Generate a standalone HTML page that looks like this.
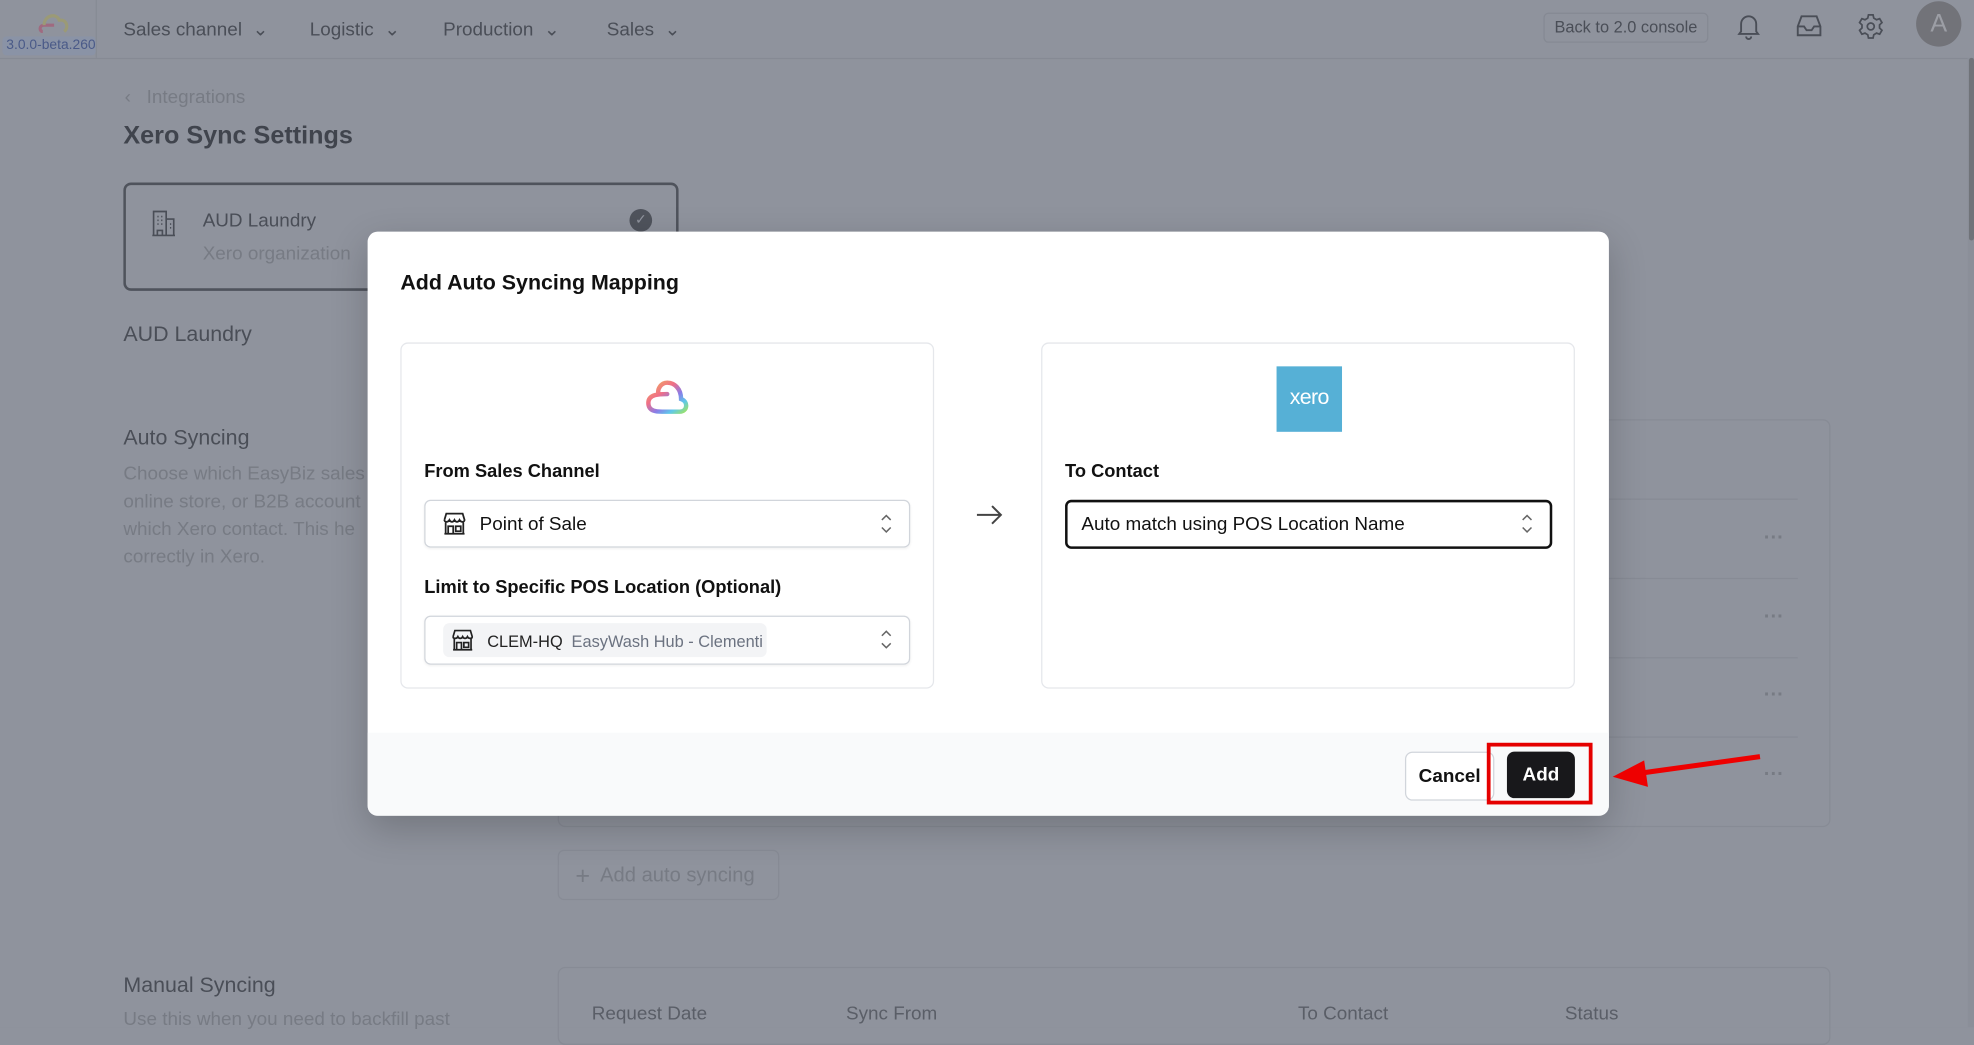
<!DOCTYPE html>
<html><head><meta charset="utf-8"><style>
html,body{margin:0;padding:0;width:1974px;height:1027px;overflow:hidden;background:#8f939d}
#w{position:absolute;left:0;top:0;width:1568px;height:816px;transform:scale(1.25893);transform-origin:0 0;font-family:"Liberation Sans",sans-serif;background:#8f939d;color:#3d414a}
.a{position:absolute;white-space:nowrap}
.g{color:#4a4e57}
.l{color:#777b84}
.m{color:#111}
</style></head><body><div id="w">
<!-- header -->
<div class="a" style="left:0;top:46px;width:1563px;height:1px;background:#868a94"></div>
<div class="a" style="left:76px;top:0;width:1px;height:46px;background:#878b95"></div>
<svg class="a" style="left:29px;top:8px" width="28" height="22" viewBox="0 0 28 22"><path d="M5 17 C2 17 2 12 6 12 L14 12" stroke="#a06a80" stroke-width="2.5" fill="none"/><path d="M6 12 C6 4 16 2 18 8 C24 7 26 14 22 17" stroke="#9b9a76" stroke-width="2.5" fill="none"/></svg>
<div class="a" style="left:2px;top:29px;width:74px;height:15px;background:#8a93a6;border-radius:3px"></div>
<div class="a" style="left:5px;top:30px;font-size:11px;color:#4a5a88">3.0.0-beta.260</div>
<div class="a g" style="left:98px;top:14px;font-size:15px">Sales channel&nbsp; ⌄</div>
<div class="a g" style="left:246px;top:14px;font-size:15px">Logistic&nbsp; ⌄</div>
<div class="a g" style="left:352px;top:14px;font-size:15px">Production&nbsp; ⌄</div>
<div class="a g" style="left:482px;top:14px;font-size:15px">Sales&nbsp; ⌄</div>
<div class="a g" style="left:1226px;top:10px;width:129px;height:22px;border:1px solid #858993;border-radius:4px;font-size:13px;line-height:22px;text-align:center">Back to 2.0 console</div>
<svg class="a" style="left:1379px;top:10px" width="20" height="22" viewBox="0 0 20 22" fill="none" stroke="#4a4e57" stroke-width="1.5"><path d="M4 15 V9 a6 6 0 0 1 12 0 V15 L17.5 17 H2.5 Z M8 19 a2 2 0 0 0 4 0"/></svg>
<svg class="a" style="left:1426px;top:11px" width="22" height="20" viewBox="0 0 22 20" fill="none" stroke="#4a4e57" stroke-width="1.5"><path d="M2 10 L5 2 H17 L20 10 V17 H2 Z M2 10 H7 L9 13 H13 L15 10 H20"/></svg>
<svg class="a" style="left:1475px;top:10px" width="22" height="22" viewBox="0 0 24 24" fill="none" stroke="#4a4e57" stroke-width="1.5"><circle cx="12" cy="12" r="3"/><path d="M10 2h4l.6 2.8 2.4 1.4 2.7-.9 2 3.4-2.1 1.9v2.8l2.1 1.9-2 3.4-2.7-.9-2.4 1.4L14 22h-4l-.6-2.8-2.4-1.4-2.7.9-2-3.4 2.1-1.9v-2.8L2.3 8.7l2-3.4 2.7.9 2.4-1.4z"/></svg>
<div class="a" style="left:1522px;top:1px;width:36px;height:36px;border-radius:50%;background:#727379;color:#9c9ea5;font-size:20px;line-height:36px;text-align:center">A</div>
<div class="a" style="left:1563px;top:46px;width:5px;height:770px;background:#8b8f99"></div>
<div class="a" style="left:1564px;top:46px;width:4px;height:145px;background:#707379;border-radius:2px"></div>
<!-- page -->
<div class="a l" style="left:99px;top:69px;font-size:15px">‹&nbsp;&nbsp; Integrations</div>
<div class="a" style="left:98px;top:97px;font-size:20px;font-weight:bold;color:#40444d">Xero Sync Settings</div>
<div class="a" style="left:98px;top:145px;width:437px;height:82px;border:2px solid #4f535c;border-radius:6px"></div>
<svg class="a" style="left:119px;top:166px" width="22" height="22" viewBox="0 0 22 22" fill="none" stroke="#4a4e57" stroke-width="1.3"><path d="M2 21 H20 M3 21 V2 H13 V21 M13 8 H19 V21 M6 6h1M9 6h1M6 9h1M9 9h1M6 12h1M9 12h1M6 21v-4h4v4M16 12h1M16 15h1"/></svg>
<div class="a g" style="left:161px;top:167px;font-size:15px">AUD Laundry</div>
<div class="a l" style="left:161px;top:193px;font-size:15px">Xero organization</div>
<div class="a" style="left:500px;top:166px;width:18px;height:18px;border-radius:50%;background:#4f535c;color:#8f939d;font-size:11px;line-height:18px;text-align:center">✓</div>
<div class="a g" style="left:98px;top:256px;font-size:17px">AUD Laundry</div>
<div class="a g" style="left:98px;top:338px;font-size:17px">Auto Syncing</div>
<div class="a l" style="left:98px;top:366px;font-size:15px;line-height:22px">Choose which EasyBiz sales<br>online store, or B2B account<br>which Xero contact. This he<br>correctly in Xero.</div>
<div class="a" style="left:443px;top:333px;width:1009px;height:322px;border:1px solid #878b95;border-radius:6px"></div>
<div class="a" style="left:1278px;top:396px;width:150px;height:1px;background:#878b95"></div>
<div class="a" style="left:1278px;top:459px;width:150px;height:1px;background:#878b95"></div>
<div class="a" style="left:1278px;top:522px;width:150px;height:1px;background:#878b95"></div>
<div class="a" style="left:1278px;top:585px;width:150px;height:1px;background:#878b95"></div>
<div class="a l" style="left:1401px;top:419px;font-size:16px;font-weight:bold">···</div>
<div class="a l" style="left:1401px;top:482px;font-size:16px;font-weight:bold">···</div>
<div class="a l" style="left:1401px;top:544px;font-size:16px;font-weight:bold">···</div>
<div class="a l" style="left:1401px;top:607px;font-size:16px;font-weight:bold">···</div>
<div class="a" style="left:443px;top:675px;width:174px;height:38px;border:1px solid #878b95;border-radius:5px"></div>
<div class="a l" style="left:457px;top:685px;font-size:16px"><span style="font-size:20px;vertical-align:-2px">+</span>&nbsp; Add auto syncing</div>
<div class="a g" style="left:98px;top:773px;font-size:17px">Manual Syncing</div>
<div class="a l" style="left:98px;top:801px;font-size:15px">Use this when you need to backfill past</div>
<div class="a" style="left:443px;top:768px;width:1009px;height:60px;border:1px solid #878b95;border-radius:6px"></div>
<div class="a l" style="left:470px;top:797px;font-size:15px;color:#5a5e67">Request Date</div>
<div class="a l" style="left:672px;top:797px;font-size:15px;color:#5a5e67">Sync From</div>
<div class="a l" style="left:1031px;top:797px;font-size:15px;color:#5a5e67">To Contact</div>
<div class="a l" style="left:1243px;top:797px;font-size:15px;color:#5a5e67">Status</div>
<!-- modal -->
<div class="a" style="left:292px;top:184px;width:986px;height:464px;background:#fff;border-radius:8px;overflow:hidden;box-shadow:0 10px 30px rgba(0,0,0,.2)">
 <div class="a m" style="left:26px;top:31px;font-size:17px;font-weight:bold">Add Auto Syncing Mapping</div>
 <div class="a" style="left:26px;top:88px;width:422px;height:273px;border:1px solid #e5e7eb;border-radius:6px"></div>
 <svg class="a" style="left:218px;top:117px" width="40" height="30" viewBox="0 0 40 30" fill="none" stroke-width="3.5" stroke-linecap="round"><defs><linearGradient id="gr" x1="0" y1="0" x2="1" y2="1"><stop offset="0" stop-color="#f0b35c"/><stop offset=".35" stop-color="#f06f86"/><stop offset=".6" stop-color="#8a7de8"/><stop offset=".8" stop-color="#5fc8ea"/><stop offset="1" stop-color="#9be26a"/></linearGradient></defs><path d="M20 12 C14 12 5 12 5 19 C5 26 12 26 16 26 H30 C36 26 37 18 31 16 C31 8 26 3 20 3 C15 3 12 8 13 12" stroke="url(#gr)"/></svg>
 <div class="a m" style="left:45px;top:183px;font-size:14.5px;font-weight:bold">From Sales Channel</div>
 <div class="a" style="left:45px;top:213px;width:384px;height:36px;border:1px solid #d1d5db;border-radius:5px;box-shadow:0 1px 2px rgba(0,0,0,.06)"></div>
 <svg class="a" style="left:59px;top:222px" width="20" height="20" viewBox="0 0 20 20" fill="none" stroke="#222" stroke-width="1.4"><path d="M2 7 L3.5 2 H16.5 L18 7 C18 9 15 9 14 7 C13 9 11 9 10 7 C9 9 7 9 6 7 C5 9 2 9 2 7 M3 9 V18 H17 V9 M5 18 V12 H9 V18 M11 12 H15 V16 H11 Z M2 18 H18"/></svg>
 <div class="a m" style="left:89px;top:224px;font-size:15px">Point of Sale</div>
 <svg class="a" style="left:406px;top:223px" width="12" height="18" viewBox="0 0 12 18" fill="none" stroke="#666" stroke-width="1.2"><path d="M2.5 6 L6 2.5 L9.5 6 M2.5 12 L6 15.5 L9.5 12"/></svg>
 <div class="a m" style="left:45px;top:275px;font-size:14.5px;font-weight:bold">Limit to Specific POS Location (Optional)</div>
 <div class="a" style="left:45px;top:305px;width:384px;height:37px;border:1px solid #d1d5db;border-radius:5px;box-shadow:0 1px 2px rgba(0,0,0,.06)"></div>
 <div class="a" style="left:60px;top:311px;width:257px;height:27px;background:#f3f4f6;border-radius:5px"></div>
 <svg class="a" style="left:66px;top:315px" width="19" height="19" viewBox="0 0 20 20" fill="none" stroke="#222" stroke-width="1.4"><path d="M2 7 L3.5 2 H16.5 L18 7 C18 9 15 9 14 7 C13 9 11 9 10 7 C9 9 7 9 6 7 C5 9 2 9 2 7 M3 9 V18 H17 V9 M5 18 V12 H9 V18 M11 12 H15 V16 H11 Z M2 18 H18"/></svg>
 <div class="a m" style="left:95px;top:318px;font-size:13px;color:#222">CLEM-HQ</div>
 <div class="a" style="left:162px;top:318px;font-size:13px;color:#6b7280">EasyWash Hub - Clementi</div>
 <svg class="a" style="left:406px;top:315px" width="12" height="18" viewBox="0 0 12 18" fill="none" stroke="#666" stroke-width="1.2"><path d="M2.5 6 L6 2.5 L9.5 6 M2.5 12 L6 15.5 L9.5 12"/></svg>
 <svg class="a" style="left:482px;top:215px" width="24" height="20" viewBox="0 0 24 20" fill="none" stroke="#444" stroke-width="1.6"><path d="M2 10 H21 M14 3 L21 10 L14 17"/></svg>
 <div class="a" style="left:535px;top:88px;width:422px;height:273px;border:1px solid #e5e7eb;border-radius:6px"></div>
 <div class="a" style="left:722px;top:107px;width:52px;height:52px;background:#56b0d6;color:#fff;font-size:17px;line-height:50px;text-align:center;letter-spacing:-0.5px">xero</div>
 <div class="a m" style="left:554px;top:183px;font-size:14.5px;font-weight:bold">To Contact</div>
 <div class="a" style="left:554px;top:213px;width:383px;height:35px;border:2px solid #111;border-radius:5px"></div>
 <div class="a m" style="left:567px;top:224px;font-size:15px">Auto match using POS Location Name</div>
 <svg class="a" style="left:915px;top:223px" width="12" height="18" viewBox="0 0 12 18" fill="none" stroke="#666" stroke-width="1.2"><path d="M2.5 6 L6 2.5 L9.5 6 M2.5 12 L6 15.5 L9.5 12"/></svg>
 <div class="a" style="left:0;top:398px;width:986px;height:66px;background:#f9fafb"></div>
 <div class="a" style="left:824px;top:413px;width:69px;height:37px;border:1px solid #d1d5db;border-radius:6px;background:#fff;font-size:15px;font-weight:bold;line-height:37px;text-align:center;color:#111">Cancel</div>
 <div class="a" style="left:905px;top:413px;width:54px;height:37px;border-radius:6px;background:#18181b;color:#fff;font-size:15px;font-weight:bold;line-height:37px;text-align:center">Add</div>
</div>
<div class="a" style="left:1181px;top:590px;width:78px;height:43px;border:3px solid #e50000"></div>
<svg class="a" style="left:1276px;top:592px" width="126" height="40" viewBox="0 0 126 40"><path d="M122 9 L28 22" stroke="#e00" stroke-width="4"/><path d="M5 25 L30 12 L33 33 Z" fill="#e00"/></svg>
</div></body></html>
